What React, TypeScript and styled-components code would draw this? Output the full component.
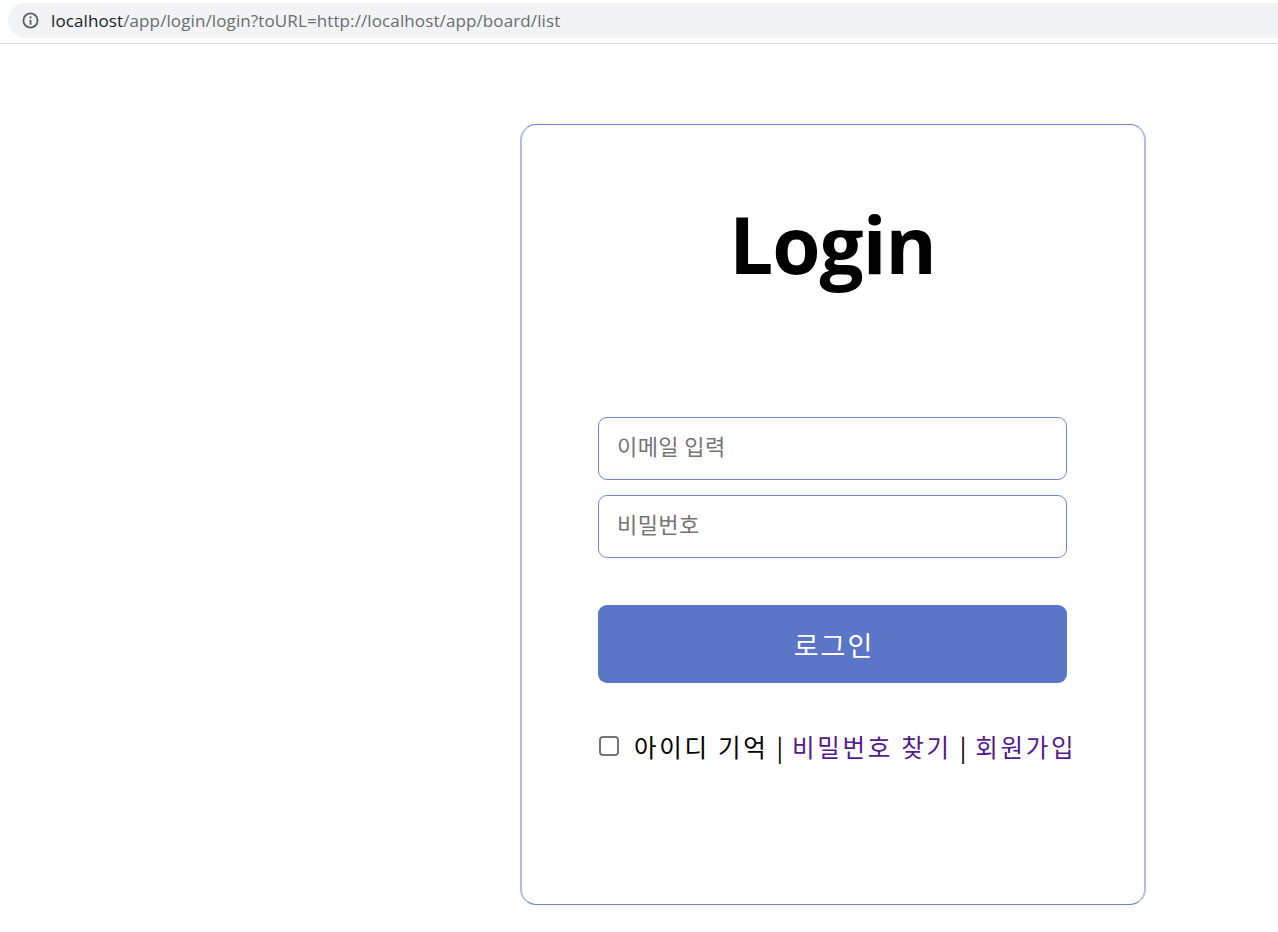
import * as React from 'react';
import styled, { createGlobalStyle } from 'styled-components';

const GlobalStyle = createGlobalStyle`
  html, body {
    margin: 0;
    padding: 0;
    background: #fff;
    font-family: "Noto Sans CJK KR", "Noto Sans", sans-serif;
  }
`;

const Page = styled.div`
  width: 1278px;
  height: 932px;
  overflow: hidden;
  display: flex;
  flex-direction: column;
`;

// browser chrome
const Chrome = styled.div`
  height: 44px;
  flex-shrink: 0;
  box-sizing: border-box;
  padding: 3px 0 5px 8px;
  border-bottom: 1px solid #dadce0;
`;

const AddressBar = styled.div`
  height: 35px;
  background: #f1f3f4;
  border-radius: 18px 0 0 18px;
  display: flex;
  align-items: center;
  padding-left: 14px;
  font-family: "Open Sans", sans-serif;
  font-size: 17px;
  letter-spacing: 0.11px;
  color: #6a6d70;
`;

const InfoIcon = styled.svg`
  width: 17px;
  height: 17px;
  margin-right: 12px;
  flex-shrink: 0;
`;

const Host = styled.span`
  color: #202124;
`;

const Main = styled.div`
  flex: 1;
  display: flex;
  padding: 80px 0 0 520px;
`;

const Card = styled.div`
  width: 626px;
  height: 781px;
  box-sizing: border-box;
  border-style: solid;
  border-width: 1px 2px;
  border-color: #7389cf #b0bee6;
  border-radius: 16px;
  padding: 0 77px 0 76px;
  display: flex;
  flex-direction: column;
`;

const Title = styled.h1`
  margin: 70px 0 0;
  height: 98px;
  line-height: 98px;
  text-align: center;
  font-family: "Open Sans", sans-serif;
  font-size: 78px;
  font-weight: 700;
  letter-spacing: -1px;
  color: #000;
`;

const Fields = styled.div`
  margin-top: 124px;
`;

const Field = styled.input`
  display: block;
  box-sizing: border-box;
  width: 469px;
  height: 63px;
  margin-bottom: 15px;
  padding: 0 18px 8px;
  border: 1px solid #7389cf;
  border-radius: 9px;
  outline: none;
  font-family: "Noto Sans CJK KR", sans-serif;
  font-size: 22px;
  letter-spacing: 0.4px;

  &::placeholder {
    color: #757575;
    opacity: 1;
  }
`;

const SubmitButton = styled.button`
  display: block;
  width: 469px;
  height: 78px;
  margin-top: 32px;
  padding: 0 0 0 3px;
  border: none;
  border-radius: 9px;
  background: #5b76c6;
  color: #fff;
  font-family: "Noto Sans CJK KR", sans-serif;
  font-size: 27px;
  letter-spacing: 2px;
  cursor: pointer;
`;

const Options = styled.div`
  margin-top: 43px;
  height: 40px;
  display: flex;
  align-items: center;
  white-space: nowrap;
  font-size: 24.5px;
  letter-spacing: 2.7px;
  color: #000;
`;

const Check = styled.span`
  display: inline-block;
  box-sizing: border-box;
  width: 20px;
  height: 20px;
  margin: 0 15px 0 1px;
  border: 2px solid #767676;
  border-radius: 4px;
  background: #fff;
  flex-shrink: 0;
`;

const Separator = styled.span`
  margin: 0 9px 0 8px;
  letter-spacing: 0;
  color: #000;
`;

const Link = styled.a`
  color: #551a8b;
  text-decoration: none;
`;

export default function App() {
  return (
    <Page>
      <GlobalStyle />
      <Chrome>
        <AddressBar>
          <InfoIcon viewBox="0 0 24 24" fill="none" stroke="#5f6368" strokeWidth="2.6">
            <circle cx="12" cy="12" r="10" />
            <line x1="12" y1="11" x2="12" y2="18" />
            <line x1="12" y1="6" x2="12" y2="9" />
          </InfoIcon>
          <span>
            <Host>localhost</Host>/app/login/login?toURL=http://localhost/app/board/list
          </span>
        </AddressBar>
      </Chrome>
      <Main>
        <Card>
          <Title>Login</Title>
          <Fields>
            <Field type="text" placeholder="이메일 입력" />
            <Field type="password" placeholder="비밀번호" />
          </Fields>
          <SubmitButton type="button">로그인</SubmitButton>
          <Options>
            <Check />
            아이디 기억
            <Separator>|</Separator>
            <Link href="#find">비밀번호 찾기</Link>
            <Separator>|</Separator>
            <Link href="#join">회원가입</Link>
          </Options>
        </Card>
      </Main>
    </Page>
  );
}
